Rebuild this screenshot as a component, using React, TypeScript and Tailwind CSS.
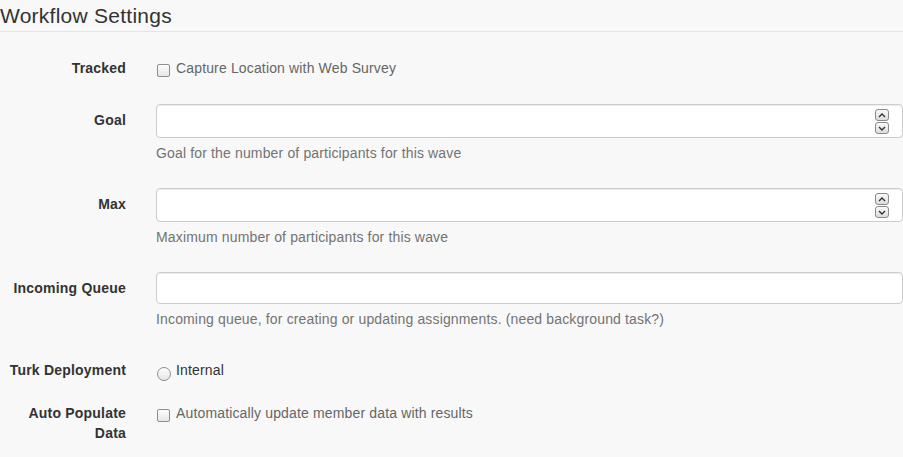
import React from "react";

function Checkbox({ className = "" }: { className?: string }) {
  return (
    <span
      className={`inline-block w-[13px] h-[13px] shrink-0 rounded-[2px] border border-[#8e8e8e] bg-gradient-to-b from-[#fdfdfd] to-[#e6e6e6] ${className}`}
    />
  );
}

function Radio({ className = "" }: { className?: string }) {
  return (
    <span
      className={`inline-block w-[14px] h-[14px] shrink-0 rounded-full border border-[#8e8e8e] bg-gradient-to-b from-[#fdfdfd] to-[#e6e6e6] ${className}`}
    />
  );
}

function Spinner() {
  const btn =
    "flex items-center justify-center w-[14px] h-[12px] rounded-[3px] border border-[#8a8a8a] bg-gradient-to-b from-[#fafafa] to-[#dcdcdc]";
  return (
    <div className="absolute right-[13px] top-[4px] flex flex-col gap-[1px]">
      <div className={btn}>
        <svg width="8" height="5" viewBox="0 0 8 5">
          <path d="M1 4 L4 1 L7 4" fill="none" stroke="#333" strokeWidth="1.4" />
        </svg>
      </div>
      <div className={btn}>
        <svg width="8" height="5" viewBox="0 0 8 5">
          <path d="M1 1 L4 4 L7 1" fill="none" stroke="#333" strokeWidth="1.4" />
        </svg>
      </div>
    </div>
  );
}

function NumberRow({ label, help, className = "" }: { label: string; help: string; className?: string }) {
  return (
    <div className={`flex ${className}`}>
      <div className="w-[126px] shrink-0 text-right font-bold tracking-[0.2px] pt-[6px]">{label}</div>
      <div className="ml-[30px] flex-1">
        <div className="relative h-[34px] rounded-[4px] border border-[#cccccc] bg-white shadow-[inset_0_1px_1px_rgba(0,0,0,0.075)]">
          <Spinner />
        </div>
        <div className="mt-[5px] text-[#737373]">{help}</div>
      </div>
    </div>
  );
}

export default function App() {
  return (
    <div className="min-h-screen bg-[#f8f8f8] font-['Liberation_Sans',Arial,sans-serif] text-[14px] leading-[20px] tracking-[0.15px] text-[#333]">
      <div className="h-[32px] border-b border-[#e5e5e5] text-[21px] leading-[31px] tracking-[0.25px]">Workflow Settings</div>

      <div className="flex mt-[26px]">
        <div className="w-[126px] shrink-0 text-right font-bold tracking-[0.2px]">Tracked</div>
        <div className="ml-[31px] flex items-start">
          <Checkbox className="mt-[6px]" />
          <span className="ml-[6px] text-[#666]">Capture Location with Web Survey</span>
        </div>
      </div>

      <NumberRow className="mt-[26px]" label="Goal" help="Goal for the number of participants for this wave" />
      <NumberRow className="mt-[25px]" label="Max" help="Maximum number of participants for this wave" />

      <div className="flex mt-[25px]">
        <div className="w-[126px] shrink-0 text-right font-bold tracking-[0.2px] pt-[6px]">Incoming Queue</div>
        <div className="ml-[30px] flex-1">
          <div className="h-[32px] rounded-[4px] border border-[#cccccc] bg-white shadow-[inset_0_1px_1px_rgba(0,0,0,0.075)]" />
          <div className="mt-[5px] text-[#737373]">
            Incoming queue, for creating or updating assignments. (need background task?)
          </div>
        </div>
      </div>

      <div className="flex mt-[31px]">
        <div className="w-[126px] shrink-0 text-right font-bold tracking-[0.2px]">Turk Deployment</div>
        <div className="ml-[31px] flex items-start">
          <Radio className="mt-[7px]" />
          <span className="ml-[5px]">Internal</span>
        </div>
      </div>

      <div className="flex mt-[22px]">
        <div className="w-[126px] shrink-0 text-right font-bold tracking-[0.2px]">
          Auto Populate
          <br />
          Data
        </div>
        <div className="ml-[31px] flex items-start">
          <Checkbox className="mt-[6px]" />
          <span className="ml-[6px] text-[#666]">Automatically update member data with results</span>
        </div>
      </div>
    </div>
  );
}
